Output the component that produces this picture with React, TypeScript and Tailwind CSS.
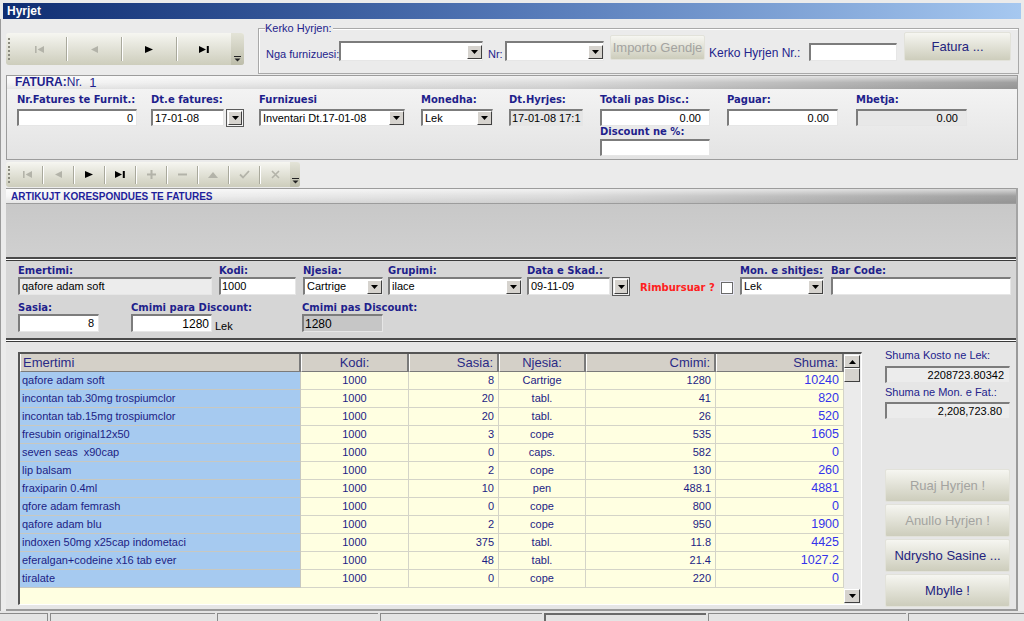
import type { ReactNode } from "react";

type Row = [string, string, string, string, string];

const rows: Row[] = [
  ["qafore adam soft", "8", "Cartrige", "1280", "10240"],
  ["incontan tab.30mg trospiumclor", "20", "tabl.", "41", "820"],
  ["incontan tab.15mg trospiumclor", "20", "tabl.", "26", "520"],
  ["fresubin original12x50", "3", "cope", "535", "1605"],
  ["seven seas  x90cap", "0", "caps.", "582", "0"],
  ["lip balsam", "2", "cope", "130", "260"],
  ["fraxiparin 0.4ml", "10", "pen", "488.1", "4881"],
  ["qfore adam femrash", "0", "cope", "800", "0"],
  ["qafore adam blu", "2", "cope", "950", "1900"],
  ["indoxen 50mg x25cap indometaci", "375", "tabl.", "11.8", "4425"],
  ["eferalgan+codeine x16 tab ever", "48", "tabl.", "21.4", "1027.2"],
  ["tiralate", "0", "cope", "220", "0"],
];

const lbl =
  "font-['DejaVu_Sans',Verdana,sans-serif] font-bold text-[10px] leading-[12px] h-[12px] text-[#1f1f8c] whitespace-nowrap";

const bar =
  "bg-[linear-gradient(to_bottom,rgba(255,255,255,0.6),rgba(255,255,255,0)_50%,rgba(0,0,0,0.07)),linear-gradient(to_right,#f7f7f7,#dcdcdc_55%,#9f9f9f)]";

const btnBg = "bg-linear-to-b from-[#f6f6f1] to-[#cdcdbc]";

const cell = "flex items-center border-r border-b border-[#d4d4c8] text-[#1d1d84]";

function Sunken({ className = "", children }: { className?: string; children?: ReactNode }) {
  return (
    <div
      className={`flex items-center overflow-hidden whitespace-nowrap border-t-2 border-l-2 border-r border-b border-t-[#7c7c7c] border-l-[#7c7c7c] border-r-[#e6e6e6] border-b-[#e6e6e6] text-[11px] text-black ${className}`}
    >
      {children}
    </div>
  );
}

function DropBtn({ className = "" }: { className?: string }) {
  return (
    <div
      className={`flex shrink-0 items-center justify-center border border-t-white border-l-white border-r-[#404040] border-b-[#404040] bg-[#d6d3ce] ${className}`}
    >
      <svg width="7" height="4" viewBox="0 0 7 4">
        <path d="M0 0H7L3.5 4Z" fill="#000" />
      </svg>
    </div>
  );
}

function Combo({ w, value, h = "h-[18px]" }: { w: string; value: string; h?: string }) {
  return (
    <Sunken className={`${w} ${h} justify-between bg-white pl-[2px]`}>
      <span>{value}</span>
      <DropBtn className="h-[14px] w-[15px]" />
    </Sunken>
  );
}

function Fld({ w, label, gap = "mt-[3px]", children }: { w: string; label: string; gap?: string; children: ReactNode }) {
  return (
    <div className={`${w} flex shrink-0 flex-col`}>
      <div className={lbl}>{label}</div>
      <div className={gap}>{children}</div>
    </div>
  );
}

function Icon({ kind, on }: { kind: string; on: boolean }) {
  const c = on ? "#000" : "#b3b3a9";
  switch (kind) {
    case "first":
      return (
        <svg width="9" height="7" viewBox="0 0 9 7">
          <rect width="1.6" height="7" fill={c} />
          <path d="M9 0V7L2.6 3.5Z" fill={c} />
        </svg>
      );
    case "prev":
      return (
        <svg width="7" height="7" viewBox="0 0 7 7">
          <path d="M7 0V7L0 3.5Z" fill={c} />
        </svg>
      );
    case "next":
      return (
        <svg width="8" height="7" viewBox="0 0 8 7">
          <path d="M0 0V7L8 3.5Z" fill={c} />
        </svg>
      );
    case "last":
      return (
        <svg width="10" height="7" viewBox="0 0 10 7">
          <path d="M0 0V7L7 3.5Z" fill={c} />
          <rect x="7.8" width="2" height="7" fill={c} />
        </svg>
      );
    case "plus":
      return (
        <svg width="9" height="9" viewBox="0 0 9 9">
          <path d="M4.5 0V9M0 4.5H9" stroke={c} strokeWidth="2" />
        </svg>
      );
    case "minus":
      return (
        <svg width="9" height="9" viewBox="0 0 9 9">
          <path d="M0 4.5H9" stroke={c} strokeWidth="2" />
        </svg>
      );
    case "up":
      return (
        <svg width="10" height="6" viewBox="0 0 10 6">
          <path d="M0 6L5 0L10 6Z" fill={c} />
        </svg>
      );
    case "check":
      return (
        <svg width="11" height="9" viewBox="0 0 11 9">
          <path d="M1 4.5L4 7.5L10 1" stroke={c} strokeWidth="1.8" fill="none" />
        </svg>
      );
    default:
      return (
        <svg width="9" height="9" viewBox="0 0 9 9">
          <path d="M1 1L8 8M8 1L1 8" stroke={c} strokeWidth="1.6" />
        </svg>
      );
  }
}

function Chevron({ className = "" }: { className?: string }) {
  return (
    <div className={`flex shrink-0 flex-col items-center justify-end bg-linear-to-b from-[#e4e4d8] to-[#bdbdaa] ${className}`}>
      <svg width="7" height="6" viewBox="0 0 7 6">
        <rect width="7" height="1" fill="#222" />
        <path d="M0.5 2.5H6.5L3.5 5.5Z" fill="#222" />
      </svg>
    </div>
  );
}

function Toolbar({
  items,
  bw,
  h,
  sepH,
  chevW,
}: {
  items: { k: string; on: boolean }[];
  bw: string;
  h: string;
  sepH: string;
  chevW: string;
}) {
  return (
    <div className={`flex ${h} shrink-0 overflow-hidden rounded-[3px] ${btnBg}`}>
      <div className="flex w-[6px] items-center justify-center">
        <div className="h-[70%] border-l-2 border-dotted border-[#8c8c80]" />
      </div>
      {items.map((it, i) => (
        <div key={i} className="flex items-center">
          <div className={`flex ${bw} items-center justify-center`}>
            <Icon kind={it.k} on={it.on} />
          </div>
          {i < items.length - 1 && <div className={`w-[1px] ${sepH} bg-[#a9a99c] shadow-[1px_0_0_#ffffff]`} />}
        </div>
      ))}
      <Chevron className={`${chevW} pb-[3px]`} />
    </div>
  );
}

function Btn({ w, h, on, children }: { w: string; h: string; on: boolean; children: ReactNode }) {
  return (
    <div
      className={`${w} ${h} flex shrink-0 items-center justify-center rounded-[2px] border border-[#e2e2da] ${btnBg} text-[13px] whitespace-nowrap ${
        on ? "text-[#24247e]" : "text-[#a3a3a0]"
      }`}
    >
      {children}
    </div>
  );
}

const cols = [
  { w: "w-[281px]", label: "Emertimi", al: "justify-start pl-[2px]" },
  { w: "w-[108px]", label: "Kodi:", al: "justify-center" },
  { w: "w-[90px]", label: "Sasia:", al: "justify-end pr-[4px]" },
  { w: "w-[87px]", label: "Njesia:", al: "justify-center" },
  { w: "w-[130px]", label: "Cmimi:", al: "justify-end pr-[4px]" },
  { w: "w-[128px]", label: "Shuma:", al: "justify-end pr-[4px]" },
];

function ScrollBtn({ up, className = "" }: { up: boolean; className?: string }) {
  return (
    <div
      className={`flex shrink-0 items-center justify-center border border-t-white border-l-white border-r-[#404040] border-b-[#404040] bg-[#d6d3ce] ${className}`}
    >
      <svg width="7" height="4" viewBox="0 0 7 4">
        <path d={up ? "M0 4H7L3.5 0Z" : "M0 0H7L3.5 4Z"} fill="#000" />
      </svg>
    </div>
  );
}

export default function App() {
  return (
    <div className="flex h-[621px] w-[1024px] flex-col overflow-hidden bg-[#ebebeb] pt-[3px] font-['Liberation_Sans',Arial,sans-serif]">
      {/* title */}
      <div className="mx-[3px] flex h-[16px] shrink-0 items-center bg-linear-to-r from-[#0f2d72] via-[#5377b6] to-[#a6c8f0] pl-[4px] text-[12px] font-bold text-white">
        Hyrjet
      </div>

      <div className="flex flex-1 flex-col border-l border-[#9a9a9a] pl-[5px]">
        {/* top row */}
        <div className="flex h-[56px] shrink-0">
          <div className="mt-[14px]">
            <Toolbar
              h="h-[32px]"
              bw="w-[54px]"
              sepH="h-[24px]"
              chevW="w-[13px]"
              items={[
                { k: "first", on: false },
                { k: "prev", on: false },
                { k: "next", on: true },
                { k: "last", on: true },
              ]}
            />
          </div>
          <div className="relative ml-[14px] mt-[9px] flex h-[46px] w-[761px] items-start border border-[#a9a9a9] shadow-[inset_1px_1px_0_#ffffff] text-[11px] text-[#23238c]">
            <span className="absolute -top-[7px] left-[6px] bg-[#ebebeb] pr-[1px] leading-[13px]">Kerko Hyrjen:</span>
            <span className="ml-[7px] mt-[19px] w-[73px] whitespace-nowrap leading-[13px]">Nga furnizuesi:</span>
            <div className="mt-[12px]">
              <Combo w="w-[144px]" h="h-[20px]" value="" />
            </div>
            <span className="ml-[5px] mt-[19px] w-[17px] leading-[13px]">Nr:</span>
            <div className="mt-[12px]">
              <Combo w="w-[99px]" h="h-[20px]" value="" />
            </div>
            <div className="ml-[6px] mt-[6px]">
              <Btn w="w-[95px]" h="h-[25px]" on={false}>
                Importo Gendje
              </Btn>
            </div>
            <span className="ml-[4px] mt-[17px] w-[100px] whitespace-nowrap text-[12px] leading-[14px]">Kerko Hyrjen Nr.:</span>
            <div className="mt-[14px]">
              <Sunken className="h-[18px] w-[88px] bg-white" />
            </div>
            <div className="ml-[7px] mt-[3px]">
              <Btn w="w-[107px]" h="h-[29px]" on={true}>
                Fatura ...
              </Btn>
            </div>
          </div>
        </div>

        {/* fatura panel */}
        <div className="flex h-[85px] w-[1012px] shrink-0 flex-col border border-[#9c9c9c] bg-linear-to-b from-[#f6f6f6] to-[#e3e3e3]">
          <div className={`flex h-[13px] shrink-0 items-center pl-[8px] text-[#1f1f8c] ${bar}`}>
            <span className="text-[12px] font-bold leading-[13px]">FATURA:</span>
            <span className="text-[12px] leading-[13px]">Nr.</span>
            <span className="ml-[7px] text-[13px] leading-[13px]">1</span>
          </div>
          <div className="flex pl-[10px] pt-[5px]">
            <Fld w="w-[134px]" label="Nr.Fatures te Furnit.:">
              <Sunken className="h-[17px] w-[120px] justify-end bg-white pr-[3px]">0</Sunken>
            </Fld>
            <Fld w="w-[108px]" label="Dt.e fatures:">
              <div className="flex">
                <Sunken className="h-[17px] w-[73px] bg-white pl-[2px]">17-01-08</Sunken>
                <div className="ml-[2px] flex h-[18px] w-[18px] items-center justify-center border border-[#5a5a5a] bg-[#f4f4f4]">
                  <DropBtn className="h-[14px] w-[14px]" />
                </div>
              </div>
            </Fld>
            <Fld w="w-[162px]" label="Furnizuesi">
              <Combo w="w-[146px]" h="h-[17px]" value="Inventari Dt.17-01-08" />
            </Fld>
            <Fld w="w-[88px]" label="Monedha:">
              <Combo w="w-[72px]" h="h-[17px]" value="Lek" />
            </Fld>
            <Fld w="w-[91px]" label="Dt.Hyrjes:">
              <Sunken className="h-[17px] w-[74px] bg-[#e6e6e6] pl-[1px]">17-01-08 17:1</Sunken>
            </Fld>
            <div className="flex w-[127px] shrink-0 flex-col">
              <div className={lbl}>Totali pas Disc.:</div>
              <Sunken className="mt-[3px] h-[17px] w-[110px] justify-end bg-white pr-[8px]">0.00</Sunken>
              <div className={lbl}>Discount ne %:</div>
              <Sunken className="mt-[1px] h-[17px] w-[110px] bg-white" />
            </div>
            <Fld w="w-[129px]" label="Paguar:">
              <Sunken className="h-[17px] w-[111px] justify-end bg-white pr-[8px]">0.00</Sunken>
            </Fld>
            <Fld w="w-[111px]" label="Mbetja:">
              <Sunken className="h-[17px] w-[111px] justify-end bg-[#e8e8e8] pr-[8px]">0.00</Sunken>
            </Fld>
          </div>
        </div>

        {/* toolbar 2 */}
        <div className="mt-[2px] w-[294px]">
          <Toolbar
            h="h-[25px]"
            bw="w-[30px]"
            sepH="h-[18px]"
            chevW="w-[10px]"
            items={[
              { k: "first", on: false },
              { k: "prev", on: false },
              { k: "next", on: true },
              { k: "last", on: true },
              { k: "plus", on: false },
              { k: "minus", on: false },
              { k: "up", on: false },
              { k: "check", on: false },
              { k: "x", on: false },
            ]}
          />
        </div>

        {/* artikujt */}
        <div className="mt-[1px] flex w-[1012px] shrink-0 flex-col border-r-2 border-[#a4a4a4]">
          <div className={`flex h-[16px] items-center border-t border-b border-[#9c9c9c] pl-[5px] text-[10px] font-bold text-[#1f1f9c] ${bar}`}>
            ARTIKUJT KORESPONDUES TE FATURES
          </div>
          <div className="h-[53px] bg-linear-to-b from-[#c8c8c8] to-[#d0d0d0]" />
          <div className="h-[4px] border-t-2 border-b border-t-[#4a4a4a] border-b-[#3a3a3a] bg-white" />
          <div className="flex h-[77px] flex-col bg-[#d6d6d6] pl-[12px] pt-[4px]">
            <div className="flex">
              <Fld w="w-[201px]" label="Emertimi:" gap="">
                <Sunken className="h-[18px] w-[194px] bg-[#ececec] pl-[2px] text-[#ff2020]">qafore adam soft</Sunken>
              </Fld>
              <Fld w="w-[84px]" label="Kodi:" gap="">
                <Sunken className="h-[18px] w-[77px] bg-white pl-[1px]">1000</Sunken>
              </Fld>
              <Fld w="w-[85px]" label="Njesia:" gap="">
                <Combo w="w-[80px]" value="Cartrige" />
              </Fld>
              <Fld w="w-[139px]" label="Grupimi:" gap="">
                <Combo w="w-[134px]" value="ilace" />
              </Fld>
              <Fld w="w-[113px]" label="Data e Skad.:" gap="">
                <div className="flex">
                  <Sunken className="h-[18px] w-[83px] bg-white pl-[2px]">09-11-09</Sunken>
                  <div className="ml-[2px] flex h-[19px] w-[18px] items-center justify-center border border-[#5a5a5a] bg-[#f0f0f0]">
                    <DropBtn className="h-[15px] w-[14px]" />
                  </div>
                </div>
              </Fld>
              <div className="flex h-[30px] w-[100px] shrink-0 items-end">
                <span className={`${lbl} mb-[1px] text-[#ff2020]`}>Rimbursuar ?</span>
                <div className="mb-[1px] ml-[6px] h-[12px] w-[12px] border border-[#6a6a6a] bg-white shadow-[0_0_0_1px_#e8e8f4]" />
              </div>
              <Fld w="w-[91px]" label="Mon. e shitjes:" gap="">
                <Combo w="w-[84px]" value="Lek" />
              </Fld>
              <Fld w="w-[180px]" label="Bar Code:" gap="">
                <Sunken className="h-[18px] w-[180px] bg-white" />
              </Fld>
            </div>
            <div className="mt-[6px] flex">
              <Fld w="w-[113px]" label="Sasia:" gap="">
                <Sunken className="h-[18px] w-[81px] justify-end bg-white pr-[4px]">8</Sunken>
              </Fld>
              <div className="flex w-[171px] shrink-0 flex-col">
                <div className={lbl}>Cmimi para Discount:</div>
                <div className="flex items-end">
                  <Sunken className="h-[18px] w-[81px] justify-end bg-white pr-[2px] text-[12px]">1280</Sunken>
                  <span className="ml-[3px] text-[11px] leading-[11px] text-black">Lek</span>
                </div>
              </div>
              <Fld w="w-[100px]" label="Cmimi pas Discount:" gap="">
                <Sunken className="h-[18px] w-[81px] bg-[#c6c6c6] pl-[1px] text-[12px]">1280</Sunken>
              </Fld>
            </div>
          </div>
          <div className="h-[4px] border-t-2 border-b border-t-[#4a4a4a] border-b-[#3a3a3a] bg-white" />
        </div>

        {/* grid area */}
        <div className="flex h-[269px] w-[1012px] shrink-0 border-r-2 border-b-2 border-[#9a9a9a] bg-[#e6e6e6] pl-[12px] pt-[10px]">
          <div className="flex h-[253px] shrink-0 border-t-2 border-l-2 border-r border-b border-t-[#555555] border-l-[#555555] border-r-white border-b-white">
            <div className="flex w-[824px] flex-col bg-[#ffffe1]">
              <div className="flex h-[18px] shrink-0">
                {cols.map((c) => (
                  <div
                    key={c.label}
                    className={`${c.w} flex items-center ${c.al} border-l border-r-2 border-b border-l-white border-r-[#7a7a7a] border-b-[#7a7a7a] bg-[#d4d0c8] text-[13px] leading-[18px] text-[#2a2a86]`}
                  >
                    {c.label}
                  </div>
                ))}
              </div>
              {rows.map((r, i) => (
                <div key={i} className="flex h-[18px] shrink-0 text-[11px]">
                  <div className="flex w-[281px] items-center whitespace-pre border-r border-b border-[#c8c8c0] bg-[#a6caf0] pl-[2px] text-[#1d1d84]">
                    {r[0]}
                  </div>
                  <div className={`${cell} w-[108px] justify-center`}>1000</div>
                  <div className={`${cell} w-[90px] justify-end pr-[4px]`}>{r[1]}</div>
                  <div className={`${cell} w-[87px] justify-center`}>{r[2]}</div>
                  <div className={`${cell} w-[130px] justify-end pr-[4px]`}>{r[3]}</div>
                  <div className="flex w-[128px] items-center justify-end border-r border-b border-[#d4d4c8] pr-[4px] text-[12.5px] text-[#3434ea]">
                    {r[4]}
                  </div>
                </div>
              ))}
              <div className="flex-1" />
            </div>
            <div className="flex w-[17px] flex-col bg-[#ebebeb] pt-[1px] pb-[1px]">
              <ScrollBtn up className="h-[13px] w-[16px]" />
              <div className="h-[14px] w-[16px] border border-t-white border-l-white border-r-[#404040] border-b-[#404040] bg-[#d6d3ce]" />
              <div className="flex-1" />
              <ScrollBtn up={false} className="h-[14px] w-[16px]" />
            </div>
          </div>

          <div className="ml-[23px] flex w-[125px] shrink-0 flex-col text-[11px] text-[#23238c]">
            <div className="mt-[-3px] leading-[13px]">Shuma Kosto ne Lek:</div>
            <Sunken className="mt-[4px] h-[17px] w-[125px] justify-end bg-[#ececec] pr-[5px]">2208723.80342</Sunken>
            <div className="mt-[3px] leading-[13px]">Shuma ne Mon. e Fat.:</div>
            <Sunken className="mt-[3px] h-[17px] w-[125px] justify-end bg-[#ececec] pr-[7px]">2,208,723.80</Sunken>
            <div className="mt-[50px] flex flex-col gap-[2px]">
              <Btn w="w-[125px]" h="h-[33px]" on={false}>
                Ruaj Hyrjen !
              </Btn>
              <Btn w="w-[125px]" h="h-[33px]" on={false}>
                Anullo Hyrjen !
              </Btn>
              <Btn w="w-[125px]" h="h-[33px]" on={true}>
                Ndrysho Sasine ...
              </Btn>
              <Btn w="w-[125px]" h="h-[33px]" on={true}>
                Mbylle !
              </Btn>
            </div>
          </div>
        </div>
      </div>

      {/* status bar */}
      <div className="flex h-[10px] shrink-0 gap-[2px] bg-[#e4e4e4] pt-[2px]">
        <div className="w-[48px] border-t border-r border-[#8a8a8a]" />
        <div className="w-[165px] border-t border-l border-[#8a8a8a]" />
        <div className="w-[161px] border-t border-l border-[#8a8a8a]" />
        <div className="w-[162px] border-t border-l border-[#8a8a8a]" />
        <div className="w-[162px] border-t-2 border-l-2 border-[#6a6a6a]" />
        <div className="w-[198px] border-t border-l border-[#8a8a8a]" />
        <div className="flex-1 border-t border-l border-[#8a8a8a]" />
      </div>
    </div>
  );
}
